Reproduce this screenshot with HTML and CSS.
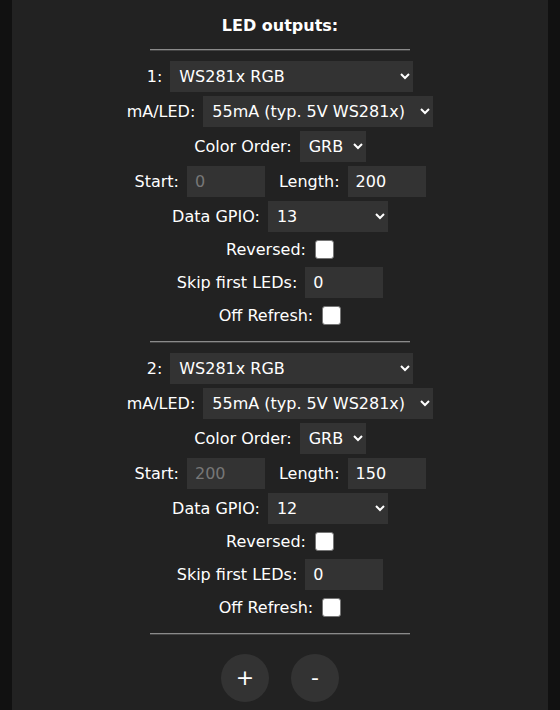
FILE: index.html
```html
<!DOCTYPE html>
<html lang="en">
<head>
  <meta charset="UTF-8" />
  <meta name="viewport" content="width=device-width, initial-scale=1.0" />
  <title>LED Settings</title>
  <link rel="stylesheet" href="styles.css">
</head>
<body>
  <div class="panel">
    <h3>LED outputs:</h3>
    <hr class="top">

    <div class="output" id="out1">
      <div class="row">
        <span>1:</span>
        <select class="sel-type">
          <option selected>WS281x RGB</option>
          <option>SK6812 RGBW</option>
          <option>TM1814</option>
          <option>APA102</option>
        </select>
      </div>
      <div class="row">
        <span>mA/LED:</span>
        <select class="sel-ma">
          <option selected>55mA (typ. 5V WS281x)</option>
          <option>35mA (eco WS2812)</option>
          <option>30mA (typ. 12V)</option>
          <option>255mA (max.)</option>
          <option>Custom</option>
        </select>
      </div>
      <div class="row">
        <span>Color Order:</span>
        <select class="sel-order">
          <option selected>GRB</option>
          <option>RGB</option>
          <option>BRG</option>
          <option>RBG</option>
          <option>BGR</option>
          <option>GBR</option>
        </select>
      </div>
      <div class="row">
        <span>Start:</span>
        <input class="num" type="number" value="0" disabled>
        <span class="next">Length:</span>
        <input class="num" type="number" value="200">
      </div>
      <div class="row">
        <span>Data GPIO:</span>
        <select class="sel-gpio">
          <option>2</option>
          <option>12</option>
          <option selected>13</option>
          <option>16</option>
        </select>
      </div>
      <div class="row check">
        <span>Reversed:</span>
        <input type="checkbox">
      </div>
      <div class="row">
        <span>Skip first LEDs:</span>
        <input class="num" type="number" value="0">
      </div>
      <div class="row check">
        <span>Off Refresh:</span>
        <input type="checkbox">
      </div>
    </div>
    <hr>

    <div class="output" id="out2">
      <div class="row">
        <span>2:</span>
        <select class="sel-type">
          <option selected>WS281x RGB</option>
          <option>SK6812 RGBW</option>
          <option>TM1814</option>
          <option>APA102</option>
        </select>
      </div>
      <div class="row">
        <span>mA/LED:</span>
        <select class="sel-ma">
          <option selected>55mA (typ. 5V WS281x)</option>
          <option>35mA (eco WS2812)</option>
          <option>30mA (typ. 12V)</option>
          <option>255mA (max.)</option>
          <option>Custom</option>
        </select>
      </div>
      <div class="row">
        <span>Color Order:</span>
        <select class="sel-order">
          <option selected>GRB</option>
          <option>RGB</option>
          <option>BRG</option>
          <option>RBG</option>
          <option>BGR</option>
          <option>GBR</option>
        </select>
      </div>
      <div class="row">
        <span>Start:</span>
        <input class="num" type="number" value="200" disabled>
        <span class="next">Length:</span>
        <input class="num" type="number" value="150">
      </div>
      <div class="row">
        <span>Data GPIO:</span>
        <select class="sel-gpio">
          <option>2</option>
          <option selected>12</option>
          <option>13</option>
          <option>16</option>
        </select>
      </div>
      <div class="row check">
        <span>Reversed:</span>
        <input type="checkbox">
      </div>
      <div class="row">
        <span>Skip first LEDs:</span>
        <input class="num" type="number" value="0">
      </div>
      <div class="row check">
        <span>Off Refresh:</span>
        <input type="checkbox">
      </div>
    </div>
    <hr>

    <div class="btns">
      <button>+</button>
      <button>-</button>
    </div>
  </div>
</body>
</html>
```

FILE: styles.css
```css
* {
  box-sizing: border-box;
}
body {
  margin: 0;
  background: #111;
  color: #fff;
  font-family: "DejaVu Sans", Verdana, sans-serif;
  font-size: 16px;
}
.panel {
  width: 536px;
  min-height: 710px;
  margin: 0 auto;
  padding-top: 16px;
  background: #222;
  text-align: center;
}
h3 {
  margin: 0;
  font-size: 16px;
  line-height: 20px;
}
hr {
  width: 260px;
  height: 0;
  margin: 12px auto 10px;
  border: 0;
  border-top: 1px solid #8a8a8a;
  border-bottom: 1px solid #444;
}
hr.top {
  margin-top: 13px;
}
.row {
  display: flex;
  justify-content: center;
  align-items: center;
  gap: 8px;
  height: 31px;
  margin-bottom: 4px;
}
.row:last-child {
  margin-bottom: 0;
}
.row.check {
  height: 27px;
  gap: 9px;
}
.row .next {
  margin-left: 6px;
}
select, input.num {
  height: 31px;
  margin: 0;
  border: none;
  border-radius: 0;
  background: #333;
  color: #fff;
  font-family: inherit;
  font-size: 16px;
}
select {
  padding: 0 6px 0 5px;
}
input.num {
  width: 78px;
  padding: 0 8px;
  -moz-appearance: textfield;
}
input.num::-webkit-outer-spin-button,
input.num::-webkit-inner-spin-button {
  -webkit-appearance: none;
  margin: 0;
}
input.num:disabled {
  color: #777;
}
.sel-type { width: 243px; }
.sel-ma { width: 230px; }
.sel-order {
  width: 66px;
  padding-right: 2px;
}
.sel-gpio { width: 120px; }
input[type=checkbox] {
  -webkit-appearance: none;
  appearance: none;
  width: 19px;
  height: 19px;
  margin: 0;
  background: #fff;
  border: 1.5px solid #767676;
  border-radius: 3px;
}
.btns {
  display: flex;
  justify-content: center;
  gap: 22px;
  padding-top: 9px;
}
button {
  width: 48px;
  height: 48px;
  padding: 0;
  border: none;
  border-radius: 50%;
  background: #333;
  color: #fff;
  font-family: inherit;
  font-size: 22px;
  line-height: 48px;
  cursor: pointer;
}
```
